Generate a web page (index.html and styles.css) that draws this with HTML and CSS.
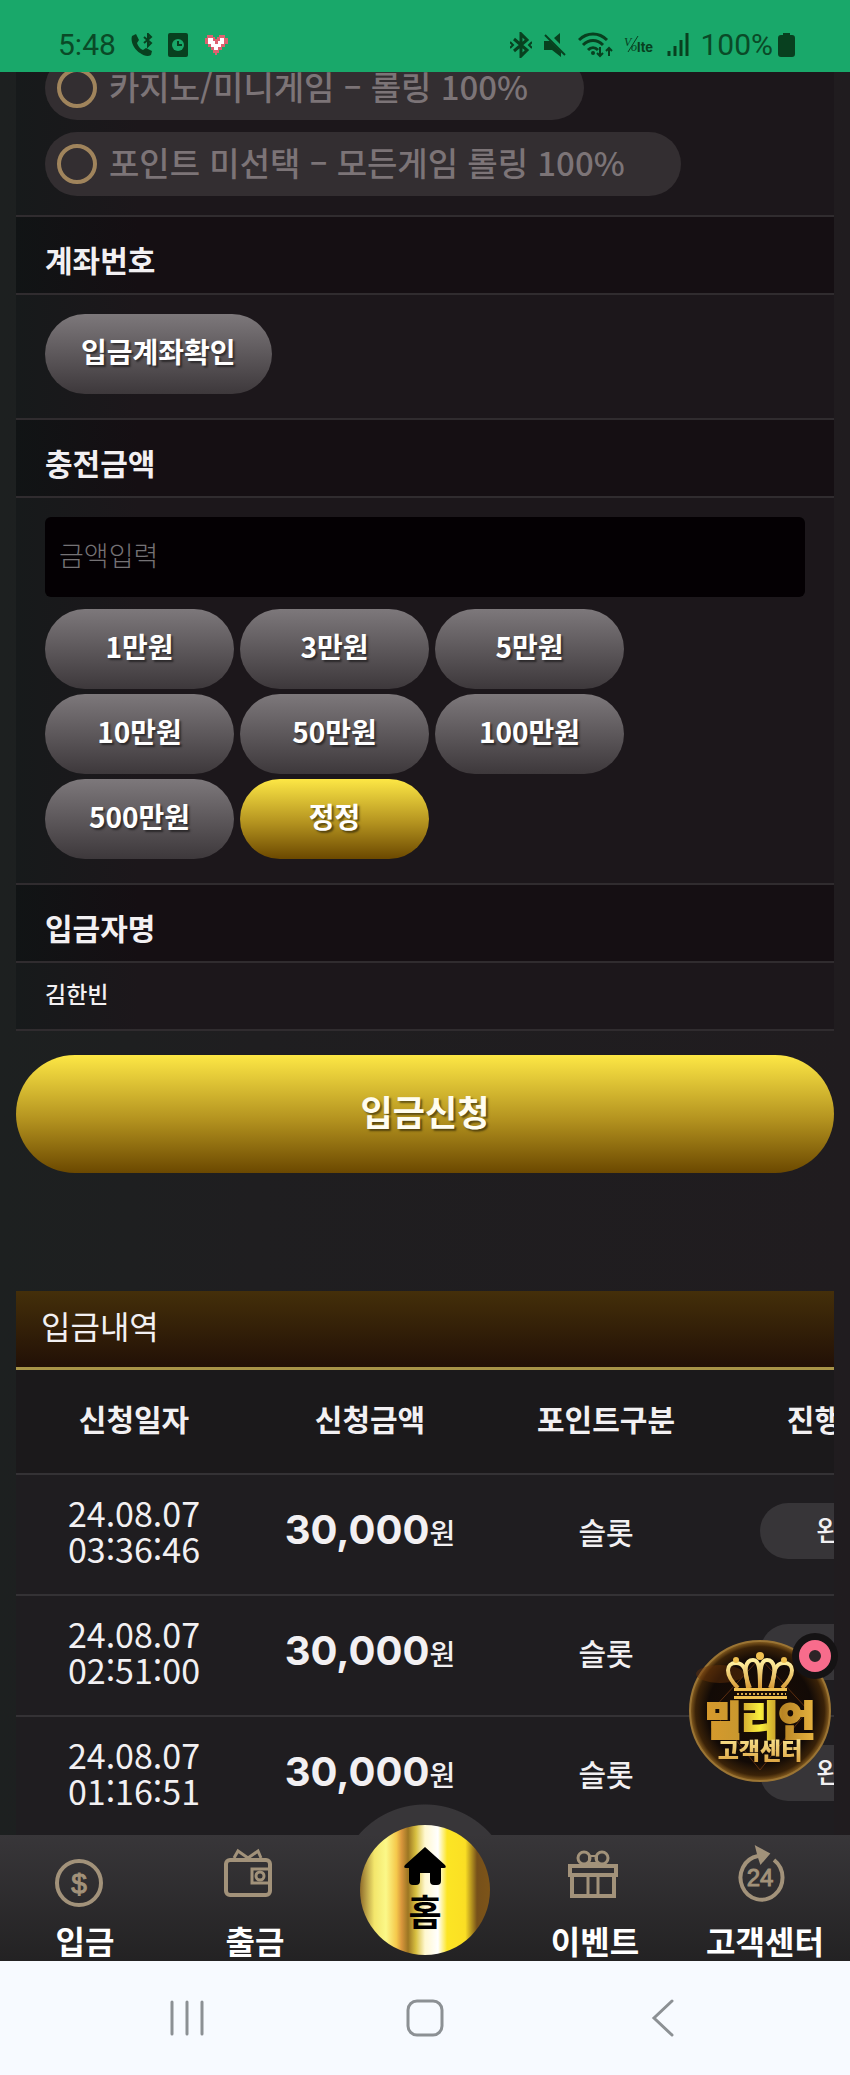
FILE: index.html
```html
<!DOCTYPE html>
<html lang="ko">
<head>
    <meta charset="UTF-8">
    <meta name="viewport" content="width=device-width, initial-scale=1.0">
    <title>입금신청</title>
    <link rel="stylesheet" href="styles.css">
</head>
<body>
    <header class="status">
        <div class="status-group">
            <span>5:48</span>
            <svg width="22" height="24" viewBox="0 0 22 24" fill="#08401f">
                <path d="M1 3l4-2 3 6-2 3c1 3 3 6 6 7l3-2 6 3-1 4c-3 2-7 1-11-2C4 17-1 9 1 3z"/>
                <path d="M13 4l7 6-3 3V1l3 3-7 6" fill="none" stroke="#08401f" stroke-width="2"/>
            </svg>
            <svg width="20" height="24" viewBox="0 0 20 24">
                <rect width="20" height="24" rx="2" fill="#08401f"/>
                <circle cx="10" cy="12" r="6" fill="#19a86a"/>
                <path d="M10 8v4h4" fill="none" stroke="#08401f" stroke-width="2"/>
            </svg>
            <svg width="26" height="22" viewBox="0 0 26 22">
                <path d="M4 1h6v2h2v2h2V3h2V1h6v3h3v6h-3v3h-3v3h-3v3h-2v2h-2v-2h-2v-3H8v-3H5v-3H2V4h2z" fill="#dd6270"/>
                <path d="M5 4h5v3h2v3h3V7h2V4h4v6h-3v3h-3v3h-4v-3H8v-3H5z" fill="#fff"/>
            </svg>
        </div>
        <div class="status-group right">
            <svg width="22" height="26" viewBox="0 0 22 26" fill="none" stroke="#08401f" stroke-width="3">
                <path d="M4 7l13 11-6 6V2l6 6L4 19"/>
                <path d="M0 10l3 3-3 3M22 10l-3 3 3 3" stroke-width="2"/>
            </svg>
            <svg width="24" height="26" viewBox="0 0 24 26" fill="#08401f">
                <path d="M1 9h6L18 20v5l-9-7H1zM11 6l6-5v11z"/>
                <path d="M2 3l20 20" stroke="#08401f" stroke-width="2"/>
            </svg>
            <svg width="35" height="26" viewBox="0 0 35 26" fill="none" stroke="#08401f" stroke-width="3">
                <path d="M1 8c8-8 20-8 28 0M5 13c6-6 14-6 20 0M10 18c3-3 7-3 10 0"/>
                <circle cx="15" cy="21" r="2" fill="#08401f" stroke="none"/>
                <path d="M22 15v9m-3-3l3 3 3-3M31 24v-8m-3 3l3-3 3 3" stroke-width="2"/>
            </svg>
            <svg width="32" height="24" viewBox="0 0 32 24" fill="#08401f">
                <text x="0" y="13" class="vo">V</text>
                <text x="7" y="18" class="vo">o</text>
                <path d="M4 19L14 3" stroke="#08401f" stroke-width="1"/>
                <text x="13" y="19" class="lte">lte</text>
            </svg>
            <svg width="22" height="24" viewBox="0 0 22 24" stroke="#08401f" stroke-width="3">
                <path d="M2 18v5M8 13v10M14 7v16M20 0v23"/>
            </svg>
            <div class="battery">
                <span>100%</span>
                <svg width="17" height="24" viewBox="0 0 17 24" fill="#08401f">
                    <path d="M5 0h7v2h2q3 0 3 3v16q0 3-3 3H3q-3 0-3-3V5q0-3 3-3h2z"/>
                </svg>
            </div>
        </div>
    </header>

    <main class="content">
        <form>
            <div class="charge">
                <div class="points">
                    <label class="point"><input type="radio" name="point"><span>카지노/미니게임 – 롤링 100%</span></label>
                    <label class="point"><input type="radio" name="point"><span>포인트 미선택 – 모든게임 롤링 100%</span></label>
                </div>
                <h2>계좌번호</h2>
                <div class="field">
                    <button type="button" class="btn btn-account">입금계좌확인</button>
                </div>
                <h2><label for="amount">충전금액</label></h2>
                <div class="field">
                    <input type="text" id="amount" class="amount-input" placeholder="금액입력">
                    <div class="amounts">
                        <button type="button" class="btn">1만원</button>
                        <button type="button" class="btn">3만원</button>
                        <button type="button" class="btn">5만원</button>
                        <button type="button" class="btn">10만원</button>
                        <button type="button" class="btn">50만원</button>
                        <button type="button" class="btn">100만원</button>
                        <button type="button" class="btn">500만원</button>
                        <button type="button" class="btn btn-gold">정정</button>
                    </div>
                </div>
                <h2>입금자명</h2>
                <div class="name">김한빈</div>
            </div>
            <button type="submit" class="submit btn-gold">입금신청</button>
        </form>

        <section class="history">
            <h3>입금내역</h3>
            <div class="table-wrap">
                <table>
                    <thead>
                        <tr><th>신청일자</th><th>신청금액</th><th>포인트구분</th><th>진행상태</th></tr>
                    </thead>
                    <tbody>
                        <tr>
                            <td class="date">24.08.07<br>03:36:46</td>
                            <td><b class="money">30,000</b>원</td>
                            <td class="kind">슬롯</td>
                            <td><span class="state">완료</span></td>
                        </tr>
                        <tr>
                            <td class="date">24.08.07<br>02:51:00</td>
                            <td><b class="money">30,000</b>원</td>
                            <td class="kind">슬롯</td>
                            <td><span class="state">완료</span></td>
                        </tr>
                        <tr>
                            <td class="date">24.08.07<br>01:16:51</td>
                            <td><b class="money">30,000</b>원</td>
                            <td class="kind">슬롯</td>
                            <td><span class="state">완료</span></td>
                        </tr>
                    </tbody>
                </table>
            </div>
        </section>
    </main>

    <!-- floating support badge -->
    <a href="#" class="support">
        <svg width="166" height="150" viewBox="0 0 166 150">
            <defs>
                <radialGradient id="ball">
                    <stop offset="0" stop-color="#1c0d04"/>
                    <stop offset="0.75" stop-color="#120a06"/>
                    <stop offset="0.92" stop-color="#3a2208"/>
                    <stop offset="1" stop-color="#8a6020"/>
                </radialGradient>
                <linearGradient id="gold" x1="0" x2="1" y1="0" y2="0">
                    <stop offset="0" stop-color="#d89a2c"/>
                    <stop offset="0.3" stop-color="#c9972e"/>
                    <stop offset="0.5" stop-color="#fbf03c"/>
                    <stop offset="0.7" stop-color="#b88424"/>
                    <stop offset="1" stop-color="#e8b440"/>
                </linearGradient>
                <linearGradient id="pale" x1="0" x2="0" y1="0" y2="1">
                    <stop offset="0" stop-color="#fff0a0"/>
                    <stop offset="1" stop-color="#d89c38"/>
                </linearGradient>
            </defs>
            <circle cx="72" cy="79" r="70" fill="url(#ball)" stroke="#9a7434" stroke-width="2"/>
            <ellipse cx="32" cy="42" rx="24" ry="9" fill="#6b3208" opacity="0.45"/>
            <path d="M72 26l48 52-48 60-48-60z" fill="none" stroke="#7a3c14" stroke-width="1" opacity="0.7"/>
            <g fill="none" stroke="url(#pale)" stroke-width="4">
                <path d="M50 56C36 42 38 31 48 31c11 0 10 13 12 25"/>
                <path d="M62 56C54 38 58 28 65 28c6 0 7 8 7 28"/>
                <path d="M82 56C90 38 86 28 79 28c-6 0-7 8-7 28"/>
                <path d="M94 56c14-14 12-25 2-25-11 0-10 13-12 25"/>
            </g>
            <g fill="#f0c050">
                <circle cx="72" cy="24" r="4"/>
                <circle cx="48" cy="28" r="3"/>
                <circle cx="96" cy="28" r="3"/>
                <rect x="46" y="56" width="53" height="3"/>
                <rect x="46" y="64" width="53" height="3"/>
            </g>
            <path d="M49 62h49" stroke="#d8a848" stroke-width="2" stroke-dasharray="2 2"/>
            <text x="72" y="103" class="badge-name" fill="url(#gold)" stroke="url(#gold)">밀리언</text>
            <text x="72" y="127" class="badge-sub" fill="url(#pale)">고객센터</text>
            <circle cx="127" cy="24" r="23" fill="#151314"/>
            <circle cx="127" cy="24" r="11" fill="#2c2427" stroke="#f86c8c" stroke-width="10"/>
        </svg>
    </a>

    <nav class="menu">
        <a href="#" class="menu-item">
            <svg width="64" height="64" viewBox="0 0 64 64" fill="none" stroke="#a2927a" stroke-width="4">
                <circle cx="26" cy="39" r="22"/>
                <text x="26" y="49" class="coin">$</text>
            </svg>
            <span>입금</span>
        </a>
        <a href="#" class="menu-item">
            <svg width="64" height="64" viewBox="0 0 64 64" fill="none" stroke="#a2927a" stroke-width="4">
                <rect x="3" y="16" width="44" height="35" rx="4"/>
                <path d="M11 14l4-7 10 7M25 14l10-7 3 7" stroke-width="3"/>
                <path d="M47 25H29v14h18" stroke-width="3"/>
                <circle cx="37" cy="32" r="4" stroke-width="3"/>
            </svg>
            <span>출금</span>
        </a>
        <a href="#" class="menu-item home">
            <span class="home-ball">
                <svg width="44" height="40" viewBox="0 0 44 40">
                    <path d="M22 1l20 18q2 3-1 3h-3v13q0 4-4 4h-3q-4 0-4-4v-8H17v8q0 4-4 4h-3q-4 0-4-4V22H3q-3 0-1-3z"/>
                </svg>
                <span>홈</span>
            </span>
        </a>
        <a href="#" class="menu-item">
            <svg width="64" height="64" viewBox="0 0 64 64" fill="none" stroke="#a2927a" stroke-width="4">
                <rect x="7" y="22" width="46" height="9"/>
                <path d="M9 31v21h42V31"/>
                <path d="M25 31v20M35 31v20" stroke-width="3"/>
                <circle cx="21" cy="14" r="6" stroke-width="3"/>
                <circle cx="39" cy="14" r="6" stroke-width="3"/>
                <path d="M26 12h8v7h-8z" stroke-width="2"/>
            </svg>
            <span>이벤트</span>
        </a>
        <a href="#" class="menu-item">
            <svg width="64" height="64" viewBox="0 0 64 64" fill="none" stroke="#a2927a" stroke-width="4">
                <path d="M41 16A21 22 0 1 1 25 12"/>
                <path d="M24 4l11 6-7 8-2-6z" fill="#a2927a" stroke-width="3"/>
                <text x="27" y="42" class="hours">24</text>
            </svg>
            <span>고객센터</span>
        </a>
    </nav>

    <footer class="system">
        <button type="button" aria-label="최근 앱">
            <svg width="38" height="38" viewBox="0 0 38 38"><path d="M4 3v32M19 3v32M34 3v32"/></svg>
        </button>
        <button type="button" aria-label="홈 화면">
            <svg width="38" height="38" viewBox="0 0 38 38"><rect x="2" y="2" width="34" height="34" rx="9"/></svg>
        </button>
        <button type="button" aria-label="뒤로">
            <svg width="38" height="38" viewBox="0 0 38 38"><path d="M28 2L10 19l18 17"/></svg>
        </button>
    </footer>
</body>
</html>
```
FILE: styles.css
```css
* {
    box-sizing: border-box;
}
body {
    margin: 0;
    height: 100vh;
    display: flex;
    flex-direction: column;
    overflow: hidden;
    background: linear-gradient(to right, #1d2020, #1f1e20 30%, #201c1f);
    color: #f2f0f2;
    font-family: "Noto Sans CJK KR", sans-serif;
}
button, input {
    font-family: inherit;
    color: inherit;
    margin: 0;
    border: none;
}
a {
    color: inherit;
    text-decoration: none;
}

/* status bar */
.status {
    flex: none;
    height: 72px;
    padding: 17px 55px 0 58px;
    display: flex;
    justify-content: space-between;
    align-items: center;
    background: #19a86a;
    color: #0a4a27;
    font-family: Roboto, sans-serif;
    font-size: 30px;
    line-height: 36px;
}
.status-group {
    display: flex;
    align-items: center;
    gap: 15px;
}
.right {
    gap: 11px;
}
.battery {
    display: flex;
    align-items: center;
    gap: 5px;
}
.vo {
    font: italic 12px "Liberation Serif", serif;
}
.lte {
    font: bold 13px Inter, sans-serif;
}

/* charge form */
.content {
    flex: 1;
    min-height: 0;
    overflow: hidden;
    padding: 0 16px;
}
.charge {
    background: linear-gradient(to right, #171a1b, #1c171b 15%);
}
.points {
    margin-top: -16px;
    padding: 0 29px 19px;
    display: flex;
    flex-direction: column;
    align-items: flex-start;
    gap: 12px;
}
.point {
    height: 64px;
    padding: 0 56px 4px 12px;
    display: flex;
    align-items: center;
    gap: 12px;
    border-radius: 32px;
    background: #332e31;
    color: #7c7477;
    font-size: 33px;
    font-weight: 500;
    white-space: nowrap;
}
.point input {
    appearance: none;
    width: 40px;
    height: 40px;
    position: relative;
    top: 2px;
    border: 4px solid #a0845c;
    border-radius: 50%;
}
h2 {
    margin: 0;
    padding: 22px 29px 14px;
    border-top: 2px solid #302c2f;
    border-bottom: 2px solid #302c2f;
    background: linear-gradient(to right, #111415, #150f13 15%);
    font-size: 30px;
    line-height: 40px;
}
.field {
    padding: 19px 29px 24px;
}
.btn {
    height: 80px;
    padding: 0 0 6px;
    border-radius: 40px;
    background: linear-gradient(#7d787b, #3d383b);
    color: #fff;
    font-size: 28px;
    font-weight: bold;
    text-shadow: 2px 2px 2px rgba(0, 0, 0, 0.5);
}
.btn-account {
    display: block;
    padding: 0 36px 6px;
}
.btn-gold {
    background: linear-gradient(#fde745, #b3921f 55%, #6b4800);
}
.amount-input {
    display: block;
    width: 100%;
    height: 80px;
    padding: 0 14px 6px;
    border-radius: 6px;
    background: #040003;
    font-size: 27px;
}
.amount-input::placeholder {
    color: #757275;
    font-weight: 300;
}
.amounts {
    margin-top: 12px;
    display: grid;
    grid-template-columns: repeat(auto-fill, 189px);
    max-width: 600px;
    gap: 5px 6px;
}
.name {
    padding: 10px 29px 16px;
    border-bottom: 2px solid #302c2f;
    font-size: 23px;
    font-weight: 500;
    line-height: 40px;
}
.submit {
    display: block;
    width: 100%;
    height: 118px;
    margin-top: 24px;
    padding: 0 0 8px;
    border-radius: 60px;
    color: #fffdf0;
    font-size: 35px;
    font-weight: bold;
    text-shadow: 2px 2px 2px rgba(0, 0, 0, 0.5);
}

/* history table */
.history {
    margin-top: 118px;
    background: #1b191b;
}
h3 {
    margin: 0;
    height: 79px;
    padding: 10px 25px;
    border-bottom: 3px solid #a89448;
    background: linear-gradient(#442f0a, #221006);
    font-size: 32px;
    font-weight: normal;
    line-height: 48px;
}
.table-wrap {
    overflow: hidden;
}
table {
    width: 944px;
    table-layout: fixed;
    border-spacing: 0;
    text-align: center;
}
th, td {
    height: 121px;
    padding: 0 0 7px;
    border-bottom: 2px solid #343235;
    background: #1f1d20;
    font-size: 28px;
    font-weight: 500;
    line-height: 36px;
}
th {
    height: 105px;
    padding: 0 0 8px;
    background: #1b191b;
    font-size: 30px;
    font-weight: bold;
}
.date {
    font-size: 34px;
    font-weight: normal;
}
.money {
    font-family: Inter, sans-serif;
    font-size: 40px;
}
.kind {
    font-size: 30px;
}
.state {
    display: inline-block;
    width: 164px;
    padding: 8px 0 12px;
    border-radius: 28px;
    background: #373538;
}

.support {
    position: fixed;
    right: -4px;
    bottom: 293px;
    height: 150px;
}
.badge-name {
    font-size: 40px;
    font-weight: 900;
    text-anchor: middle;
    stroke-width: 2px;
}
.badge-sub {
    font-size: 23px;
    font-weight: 900;
    text-anchor: middle;
}

/* bottom menu */
.menu {
    flex: none;
    height: 126px;
    position: relative;
    display: flex;
    background: linear-gradient(#383639, #232223);
}
.menu-item {
    flex: 1;
    padding-top: 9px;
    display: flex;
    flex-direction: column;
    align-items: center;
    gap: 12px;
    color: #fff;
    font-size: 32px;
    font-weight: bold;
    line-height: 40px;
}
.coin {
    font: 28px "Liberation Sans", sans-serif;
    text-anchor: middle;
    fill: #a2927a;
    stroke-width: 1px;
}
.hours {
    font: 24px "Liberation Sans", sans-serif;
    text-anchor: middle;
    fill: #a2927a;
    stroke-width: 1px;
}
.home {
    padding: 0;
}
/* raised disc behind the home button */
.home::before {
    content: "";
    position: absolute;
    top: -31px;
    left: 50%;
    width: 176px;
    height: 31px;
    margin-left: -88px;
    background: radial-gradient(circle at 50% 88px, #383639 87px, transparent 88px);
}
.home-ball {
    position: absolute;
    top: -10px;
    left: 50%;
    width: 130px;
    height: 130px;
    margin-left: -65px;
    padding-top: 21px;
    border-radius: 50%;
    display: flex;
    flex-direction: column;
    align-items: center;
    background: linear-gradient(to right, #8f6c2a, #f3e66c 11%, #fbf888 20%, #f5c94c 28%, #d8963c 32%, #9c7622 37%, #d8c040 43%, #fff8d0 50%, #fff 60%, #fce524 67%, #fbdf24 81%, #76501a 90%, #7d5418);
    color: #000;
    font-size: 36px;
    line-height: 48px;
}

/* android buttons */
.system {
    flex: none;
    height: 114px;
    padding: 0 68px;
    display: flex;
    justify-content: space-between;
    align-items: center;
    background: #f7faff;
}
.system button {
    flex: 1;
    padding: 0;
    line-height: 0;
    background: none;
}
.system svg {
    fill: none;
    stroke: #8c9094;
    stroke-width: 3;
    stroke-linecap: round;
}
```
